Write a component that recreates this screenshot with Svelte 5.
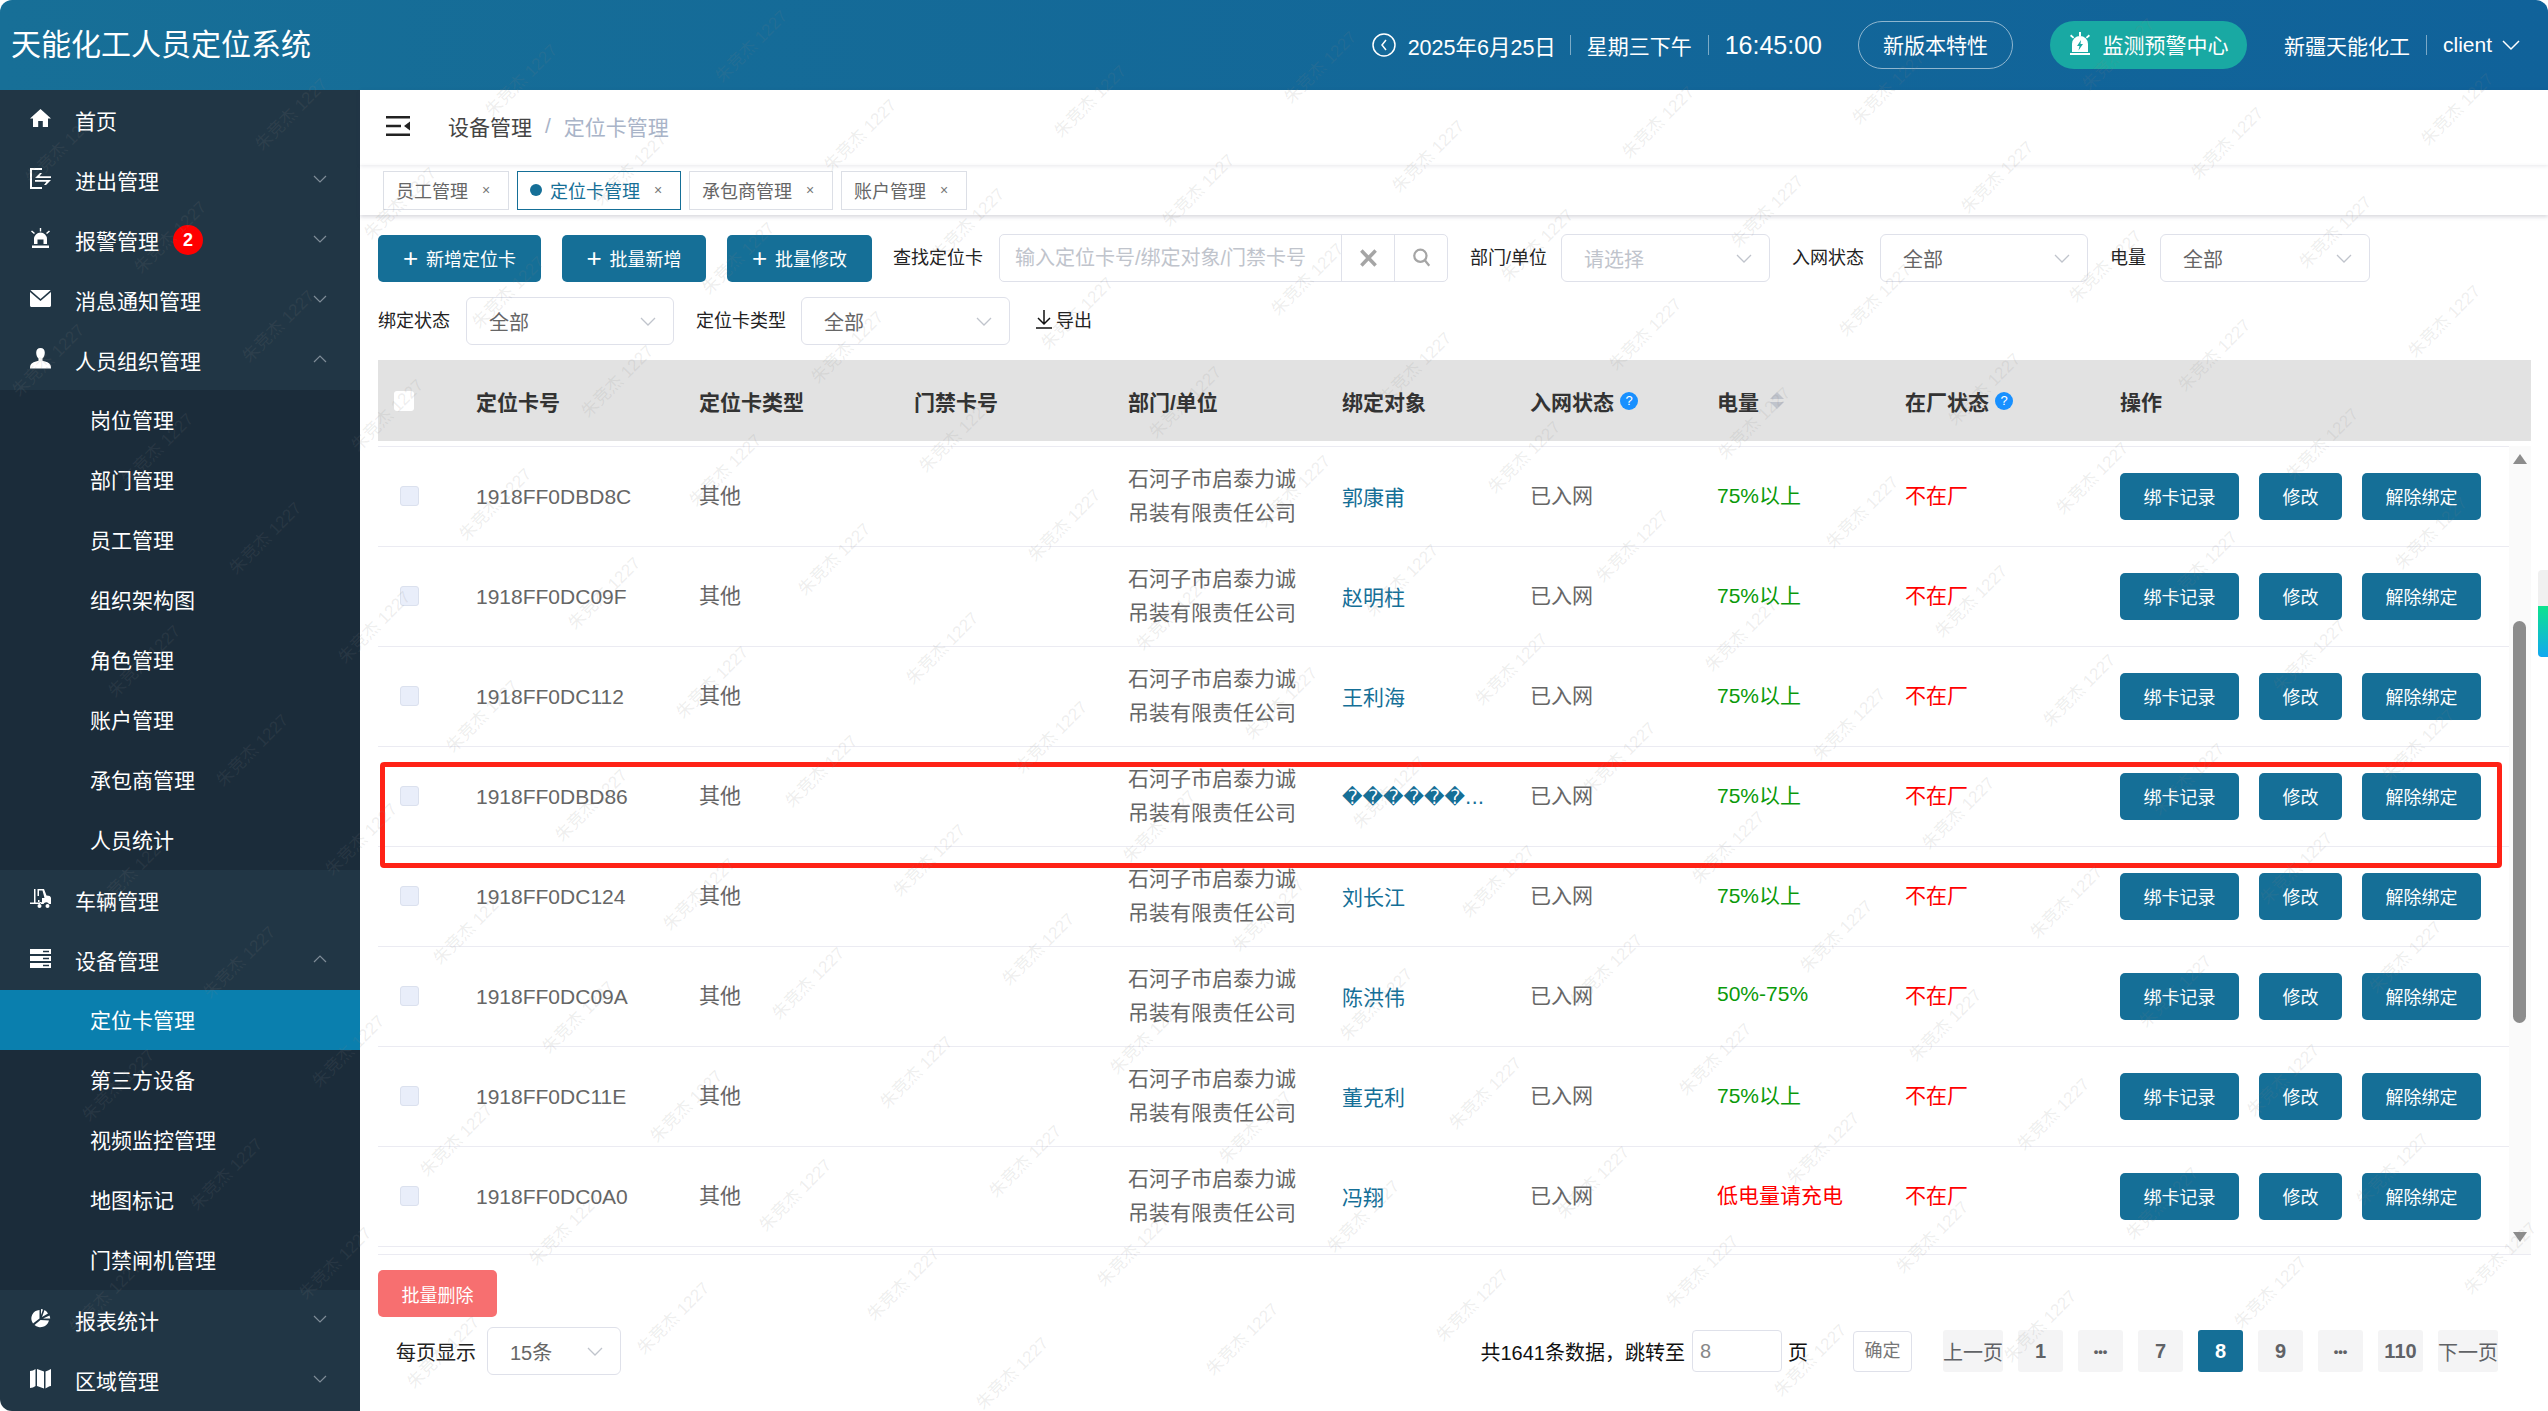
<script>
  const D = '\uFFFD'.repeat(6) + '...'

  const menu = [
    { name: '首页', icon: 'home' },
    { name: '进出管理', icon: 'inout', arrow: 'down' },
    { name: '报警管理', icon: 'alarm', arrow: 'down', badge: 2 },
    { name: '消息通知管理', icon: 'mail', arrow: 'down' },
    {
      name: '人员组织管理', icon: 'user', arrow: 'up',
      children: ['岗位管理', '部门管理', '员工管理', '组织架构图', '角色管理', '账户管理', '承包商管理', '人员统计']
    },
    { name: '车辆管理', icon: 'truck' },
    {
      name: '设备管理', icon: 'server', arrow: 'up', active: '定位卡管理',
      children: ['定位卡管理', '第三方设备', '视频监控管理', '地图标记', '门禁闸机管理']
    },
    { name: '报表统计', icon: 'pie', arrow: 'down' },
    { name: '区域管理', icon: 'map', arrow: 'down' }
  ]

  const tags = [
    { name: '员工管理' },
    { name: '定位卡管理', active: true },
    { name: '承包商管理' },
    { name: '账户管理' }
  ]

  const rows = [
    { no: '1918FF0DBD8C', who: '郭康甫', power: '75%以上' },
    { no: '1918FF0DC09F', who: '赵明柱', power: '75%以上' },
    { no: '1918FF0DC112', who: '王利海', power: '75%以上' },
    { no: '1918FF0DBD86', who: D, power: '75%以上', broken: true },
    { no: '1918FF0DC124', who: '刘长江', power: '75%以上' },
    { no: '1918FF0DC09A', who: '陈洪伟', power: '50%-75%' },
    { no: '1918FF0DC11E', who: '董克利', power: '75%以上' },
    { no: '1918FF0DC0A0', who: '冯翔', power: '低电量请充电', low: true }
  ]

  const pages = [
    { t: '上一页', wide: true }, { t: '1' }, { t: '•••', dots: true }, { t: '7' }, { t: '8', on: true },
    { t: '9' }, { t: '•••', dots: true }, { t: '110' }, { t: '下一页', wide: true }
  ]

  // the watermark repeats on a slanted lattice
  const marks = []
  for (let k = -14; k < 16; k++) {
    for (let m = -16; m < 16; m++) {
      const x = 902 + k * 230 + m * 108.5
      const y = 1283 - k * 34 + m * 89
      if (x > 36 && x < 2512 && y > 36 && y < 1375) marks.push({ x, y })
    }
  }
</script>

{#snippet chevron(dir)}
  <svg class="chev" class:up={dir === 'up'} viewBox="0 0 14 8"><polyline points="1,1 7,7 13,1" /></svg>
{/snippet}

{#snippet select(text, cls, empty)}
  <div class="select {cls}" class:empty>
    <span>{text}</span>
    <svg class="sel-arrow" viewBox="0 0 16 9"><polyline points="1,1 8,8 15,1" /></svg>
  </div>
{/snippet}

{#snippet help()}
  <span class="help">?</span>
{/snippet}

{#snippet icon(name)}
  <svg class="m-icon" viewBox="0 0 21 21" fill="#fff">
    {#if name === 'home'}
      <path d="M10.5 1 21 10.5h-3V19h-5.2v-6H8.2v6H3v-8.5H0z" />
    {:else if name === 'inout'}
      <path d="M0 0h12v2H2v17h10v2H0z" />
      <path d="M10 5 5 10h16V8.200H9.500L12 5zM16 17l5-5H5v1.800h11.500L14 17z" />
    {:else if name === 'alarm'}
      <path d="M4 16V11a6.500 6.500 0 0 1 13 0v5h-3.500v-4.500h-6V16zM2 17.500h17V20H2z" />
      <path d="M9.800 0h1.400v3.500H9.800zM1 3.500 2 2.500l3 2.500-1 1zM20 3.500l-1-1-3 2.500 1 1z" />
    {:else if name === 'mail'}
      <path d="M1.500 2h18c.5 0 .8.100 1 .3L10.500 11 .5 2.300c.2-.2.500-.3 1-.3z" />
      <path d="M0 4l10.500 9L21 4v13.500c0 .8-.7 1.500-1.500 1.500h-18C.7 19 0 18.300 0 17.500z" />
    {:else if name === 'user'}
      <path d="M10.500 0c2.800 0 4.300 2 4.300 4.800 0 2.600-1 4.600-2.300 5.700v2.200c3.500.9 7 2 8 4.300.3.8.5 2 .5 3.500H0c0-1.500.2-2.700.5-3.500 1-2.300 4.500-3.400 8-4.300v-2.200C7.200 9.400 6.200 7.400 6.200 4.800 6.200 2 7.700 0 10.500 0z" />
    {:else if name === 'truck'}
      <path d="M4 1h1.500v13.500H10v1.500H0v-1.500h4z" />
      <path d="M7.500 1h6.500l2.500 6.500c2.500 0 4.500.8 4.500 2.500v6h-2a3 3 0 0 0-5.500 0h-2.500a3 3 0 0 0-3-2V12h1.500v2c1 0 2 0 2.500.5H12V10h2.500l-2-7.500H9V8H7.500z" />
      <circle cx="9.500" cy="18" r="2" /><circle cx="17.500" cy="18" r="2" />
    {:else if name === 'server'}
      <path fill-rule="evenodd" d="M0 1h21v5H0zM13 2.700v1.600h6V2.700zM0 8h21v5H0zM13 9.700v1.600h6V9.700zM0 15h21v5H0zM13 16.700v1.600h6v-1.600z" />
    {:else if name === 'pie'}
      <path d="M9.500 2v8.500L3 15.500A8.500 8.500 0 0 1 9.500 2z" />
      <path d="M11 1a8 8 0 0 1 2 .4L11 7zM14.500 2 12 9l6-3.500A8 8 0 0 0 14.500 2zM13 10.500l6.500-3c.5 1.200.7 2.200.7 3z" />
      <path d="M10.500 12 19 12.500A9 9 0 0 1 4.500 17z" />
    {:else if name === 'map'}
      <path d="M0 3c2 0 4-1 5.500-2v17C4 19 2 20 0 20zM7 1l7 2.500V20.500L7 18zM15.500 3.500C17 3 19 2 21 1v17c-2 0-4 1.500-5.500 2.500z" />
    {/if}
  </svg>
{/snippet}

<div class="app">
  <header class="top">
    <h1>天能化工人员定位系统</h1>
    <div class="top-right">
      <svg class="clock" viewBox="0 0 24 24"><circle cx="12" cy="12" r="11" /><polyline points="14,7 10,12 14,17" /></svg>
      <span class="date">2025年6月25日</span>
      <i class="sep"></i>
      <span class="week">星期三下午</span>
      <i class="sep"></i>
      <span class="time">16:45:00</span>
      <span class="pill ghost">新版本特性</span>
      <span class="pill teal">
        <svg class="siren" viewBox="0 0 24 24" fill="#fff">
          <path d="M4 20V12a8 8 0 0 1 16 0v8zM2 21h20v2H2z" />
          <path d="M11 0h2v4h-2zM2 4l1.200-1.400 3 2.600L5 6.500zM22 4l-1.200-1.400-3 2.600L19 6.500z" />
          <path fill="#19a9a3" d="M13 8l-4 6h2.500L10.500 18.500l4.500-6.500h-2.500z" />
        </svg>
        监测预警中心
      </span>
      <span class="org">新疆天能化工</span>
      <i class="sep"></i>
      <span class="client">client</span>
      <svg class="client-arrow" viewBox="0 0 18 11"><polyline points="1,1 9,9 17,1" /></svg>
    </div>
  </header>

  <div class="body">
    <aside class="side">
      {#each menu as item}
        <div class="m-row">
          {@render icon(item.icon)}
          <span class="m-name">{item.name}</span>
          {#if item.badge}<span class="badge">{item.badge}</span>{/if}
          {#if item.arrow}{@render chevron(item.arrow)}{/if}
        </div>
        {#if item.children}
          <div class="sub">
            {#each item.children as c}
              <div class="sub-row" class:on={c === item.active}>{c}</div>
            {/each}
          </div>
        {/if}
      {/each}
    </aside>

    <main class="main">
      <div class="crumbs">
        <svg class="fold" viewBox="0 0 24 20">
          <path d="M0 0h24v2.500H0zM0 17.500h24V20H0zM0 8.700h15v2.500H0z" />
          <path d="M24 5.500v9l-6-4.500z" />
        </svg>
        <span class="c1">设备管理</span>
        <span class="c-sl">/</span>
        <span class="c2">定位卡管理</span>
      </div>

      <div class="tags">
        {#each tags as t}
          <div class="tag" class:active={t.active}>
            {#if t.active}<i class="dot"></i>{/if}
            <span>{t.name}</span>
            <span class="x">×</span>
          </div>
        {/each}
      </div>

      <div class="content">
        <div class="tools">
          <button class="btn plus b1"><span class="pl">+</span>新增定位卡</button>
          <button class="btn plus b2"><span class="pl">+</span>批量新增</button>
          <button class="btn plus b3"><span class="pl">+</span>批量修改</button>
          <label class="lb find">查找定位卡</label>
          <div class="search">
            <span class="ph">输入定位卡号/绑定对象/门禁卡号</span>
            <span class="s-cell">
              <svg viewBox="0 0 16 16" preserveAspectRatio="none"><path d="M2 2l12 12M14 2 2 14" /></svg>
            </span>
            <span class="s-cell">
              <svg viewBox="0 0 16 18"><circle cx="7" cy="7" r="5.500" /><path d="M11 11l4 5" /></svg>
            </span>
          </div>
          <label class="lb dept">部门/单位</label>
          {@render select('请选择', 'w209', true)}
          <label class="lb net">入网状态</label>
          {@render select('全部', 'w208')}
          <label class="lb pw">电量</label>
          {@render select('全部', 'w210')}
        </div>

        <div class="tools second">
          <label class="lb bind">绑定状态</label>
          {@render select('全部', 'w208')}
          <label class="lb ctype">定位卡类型</label>
          {@render select('全部', 'w209')}
          <span class="export">
            <svg viewBox="0 0 18 20"><path d="M9 1v13M3 9l6 6 6-6M1 19h16" /></svg>
            导出
          </span>
        </div>

        <div class="thead grid">
          <div class="cell"><i class="hcheck"></i></div>
          <div class="cell">定位卡号</div>
          <div class="cell">定位卡类型</div>
          <div class="cell">门禁卡号</div>
          <div class="cell">部门/单位</div>
          <div class="cell">绑定对象</div>
          <div class="cell">入网状态{@render help()}</div>
          <div class="cell">电量<span class="sort"><i class="tu"></i><i class="td"></i></span></div>
          <div class="cell">在厂状态{@render help()}</div>
          <div class="cell">操作</div>
        </div>

        <div class="tbody">
          <div class="rows">
            {#each rows as r}
              <div class="row grid">
                <div class="cell"><i class="check"></i></div>
                <div class="cell no">{r.no}</div>
                <div class="cell lift">其他</div>
                <div class="cell"></div>
                <div class="cell dep">石河子市启泰力诚<br />吊装有限责任公司</div>
                <div class="cell who" class:broken={r.broken}>{r.who}</div>
                <div class="cell lift">已入网</div>
                <div class="cell power lift" class:low={r.low}>{r.power}</div>
                <div class="cell out lift">不在厂</div>
                <div class="cell ops">
                  <button class="btn">绑卡记录</button>
                  <button class="btn">修改</button>
                  <button class="btn">解除绑定</button>
                </div>
              </div>
            {/each}
          </div>
          <div class="bar">
            <i class="arr top-arr"></i>
            <i class="thumb"></i>
            <i class="arr bot-arr"></i>
          </div>
        </div>

        <button class="btn del">批量删除</button>

        <div class="foot">
          <span class="per">每页显示</span>
          {@render select('15条', 'w134')}
          <div class="pager">
            <span class="total">共1641条数据，跳转至</span>
            <span class="jump">8</span>
            <span class="ye">页</span>
            <span class="ok">确定</span>
            {#each pages as p}
              <span class="pg" class:wide={p.wide} class:on={p.on} class:dots={p.dots}>{p.t}</span>
            {/each}
          </div>
        </div>
      </div>
    </main>
  </div>

  <div class="note"></div>
  <div class="float-tab"><i></i></div>

  <div class="wm">
    {#each marks as w}
      <span style="left:{w.x}px;top:{w.y}px">朱竞杰 1227</span>
    {/each}
  </div>
</div>

<style>
  :global(body) {
    margin: 0;
    background: #fff;
  }
  .app {
    position: relative;
    width: 2548px;
    height: 1411px;
    overflow: hidden;
    border-radius: 12px;
    font-family: 'Liberation Sans', 'Noto Sans CJK SC', sans-serif;
    font-size: 21px;
    color: #666;
    background: #fff;
  }

  /* top bar */
  .top {
    height: 90px;
    display: flex;
    align-items: center;
    background: linear-gradient(90deg, #176f97, #10629a);
    color: #fff;
  }
  .top h1 {
    margin: 0 0 0 11px;
    font-size: 30px;
    font-weight: 400;
    line-height: 1;
  }
  .top-right {
    margin-left: auto;
    display: flex;
    align-items: center;
    padding-right: 28px;
  }
  .clock {
    width: 24px;
    height: 24px;
    margin-right: 12px;
    fill: none;
    stroke: #fff;
    stroke-width: 1.500;
  }
  .date { font-size: 21.500px; width: 146px; white-space: nowrap; }
  .week { font-size: 21px; }
  .time { font-size: 25px; margin-right: 36px; }
  .sep {
    width: 1px;
    height: 20px;
    background: rgba(255, 255, 255, 0.45);
    margin: 0 16px;
  }
  .pill {
    height: 48px;
    display: flex;
    align-items: center;
    justify-content: center;
    box-sizing: border-box;
    border-radius: 24px;
    padding-bottom: 2px;
  }
  .ghost {
    width: 155px;
    border: 1px solid #8fb6cf;
    margin-right: 37px;
  }
  .teal {
    width: 197px;
    background: #19a9a3;
    margin-right: 37px;
    gap: 10px;
  }
  .siren { width: 24px; height: 24px; }
  .client { font-size: 21px; margin-right: 10px; }
  .client-arrow {
    width: 18px;
    height: 11px;
    fill: none;
    stroke: #fff;
    stroke-width: 1.500;
  }

  .body {
    display: flex;
    height: 1321px;
  }

  /* side menu */
  .side {
    width: 360px;
    flex: none;
    background: #213645;
    color: #fff;
    overflow: hidden;
  }
  .m-row {
    height: 60px;
    display: flex;
    align-items: center;
    padding-left: 30px;
    position: relative;
  }
  .m-icon {
    width: 21px;
    height: 21px;
    margin-right: 24px;
    flex: none;
    margin-top: -3px;
  }
  .badge {
    width: 30px;
    height: 30px;
    margin-left: 14px;
    border-radius: 50%;
    background: #f00;
    font-size: 18px;
    font-weight: 700;
    display: flex;
    align-items: center;
    justify-content: center;
  }
  .chev {
    position: absolute;
    right: 33px;
    top: 25px;
    width: 14px;
    height: 8px;
    fill: none;
    stroke: #7f8c97;
    stroke-width: 1.200;
  }
  .chev.up { transform: rotate(180deg); }
  .sub { background: #1b2c3a; }
  .sub-row {
    height: 60px;
    line-height: 62px;
    padding-left: 90px;
  }
  .sub-row.on { background: #0a7fae; }

  /* breadcrumb and tabs */
  .main {
    flex: 1;
    min-width: 0;
  }
  .crumbs {
    height: 75px;
    display: flex;
    align-items: center;
    padding: 0 0 3px 26px;
    box-sizing: border-box;
    box-shadow: 0 1px 4px rgba(60, 60, 90, 0.12);
    position: relative;
  }
  .fold {
    width: 24px;
    height: 20px;
    fill: #222;
    margin-right: 38px;
  }
  .c1 { color: #444; }
  .c-sl { color: #a9b4c8; margin: 0 13px; }
  .c2 { color: #a9b4c8; }
  .tags {
    height: 50px;
    display: flex;
    gap: 8px;
    padding: 6px 0 0 23px;
    box-sizing: border-box;
    box-shadow: 0 2px 4px rgba(60, 60, 90, 0.2);
    position: relative;
  }
  .tag {
    height: 39px;
    box-sizing: border-box;
    border: 1px solid #dcdfe6;
    display: flex;
    align-items: center;
    padding: 0 18px 2px 12px;
    font-size: 18px;
  }
  .tag .x {
    width: 8px;
    font-size: 14px;
    margin-left: 14px;
    color: #777;
  }
  .tag.active {
    color: #156f97;
    border-color: #156f97;
  }
  .dot {
    width: 12px;
    height: 12px;
    border-radius: 50%;
    background: #156f97;
    margin-right: 8px;
  }

  /* filter rows */
  .content {
    padding: 19px 17px 0 18px;
  }
  .tools {
    display: flex;
    align-items: center;
    height: 48px;
  }
  .tools.second {
    margin-top: 15px;
  }
  .btn {
    height: 47px;
    padding: 0 23.500px 2px;
    border: 0;
    border-radius: 5px;
    background: #156f97;
    color: #fff;
    font: inherit;
    font-size: 18px;
    white-space: nowrap;
  }
  .btn.plus {
    padding: 0 0 2px;
    display: flex;
    align-items: center;
    justify-content: center;
    margin-top: 1px;
  }
  .b1 { width: 163px; }
  .b2 { width: 144px; margin-left: 21px; }
  .b3 { width: 145px; margin-left: 21px; }
  .pl {
    font-size: 26px;
    font-weight: 300;
    margin-right: 8px;
    line-height: 1;
  }
  .lb {
    font-size: 18px;
    color: #222;
    white-space: nowrap;
    margin-top: -4px;
  }
  .find { margin-left: 21px; margin-right: 16px; }
  .dept { margin-left: 22px; margin-right: 14px; }
  .net { margin-left: 22px; margin-right: 16px; }
  .pw { margin-left: 22px; margin-right: 14px; }
  .bind { margin-right: 16px; }
  .ctype { margin-left: 22px; margin-right: 15px; }
  .search {
    width: 449px;
    height: 48px;
    box-sizing: border-box;
    display: flex;
    border: 1px solid #dfe1ea;
    border-radius: 5px;
  }
  .ph {
    flex: 1;
    padding-left: 15px;
    font-size: 20px;
    line-height: 46px;
    color: #c0c4cc;
    white-space: nowrap;
    overflow: hidden;
  }
  .s-cell {
    width: 52px;
    flex: none;
    border-left: 1px solid #dfe1ea;
    display: flex;
    align-items: center;
    justify-content: center;
  }
  .s-cell svg {
    width: 19px;
    height: 20px;
    fill: none;
    stroke: #a5a5a5;
    stroke-width: 3;
  }
  .s-cell:last-child svg { stroke-width: 2; }
  .select {
    height: 48px;
    box-sizing: border-box;
    border: 1px solid #dfe1ea;
    border-radius: 6px;
    display: flex;
    align-items: center;
    justify-content: space-between;
    padding: 0 17px 0 22px;
    font-size: 20px;
    color: #666;
    flex: none;
  }
  .select.empty { color: #c0c4cc; }
  .w209 { width: 209px; }
  .w208 { width: 208px; }
  .w210 { width: 210px; }
  .w134 { width: 134px; }
  .sel-arrow {
    width: 16px;
    height: 9px;
    fill: none;
    stroke: #c0c4cc;
    stroke-width: 1.300;
  }
  .export {
    margin-left: 25px;
    display: flex;
    align-items: center;
    gap: 3px;
    font-size: 18px;
    color: #222;
    margin-top: -4px;
  }
  .export svg {
    width: 18px;
    height: 20px;
    fill: none;
    stroke: #111;
    stroke-width: 1.500;
  }

  /* table */
  .grid {
    display: grid;
    grid-template-columns: 98px 223px 215px 214px 214px 188px 187px 188px 215px 1fr;
    align-items: center;
  }
  .thead {
    height: 81px;
    margin-top: 15px;
    background: #e2e2e2;
    font-weight: 700;
    color: #333;
    white-space: nowrap;
  }
  .cell {
    display: flex;
    align-items: center;
    min-width: 0;
  }
  .cell.lift { padding-bottom: 5px; }
  .hcheck {
    width: 20px;
    height: 20px;
    margin-left: 16px;
    background: #fff;
    border-radius: 3px;
  }
  .help {
    width: 18px;
    height: 18px;
    margin-left: 6px;
    border-radius: 50%;
    background: #1890ff;
    color: #fff;
    font-size: 13px;
    font-weight: 400;
    display: flex;
    align-items: center;
    justify-content: center;
  }
  .sort {
    margin-left: 11px;
    display: flex;
    flex-direction: column;
    gap: 3px;
  }
  .tu, .td {
    width: 0;
    height: 0;
    border-left: 7px solid transparent;
    border-right: 7px solid transparent;
  }
  .tu { border-bottom: 7px solid #c0c4cc; }
  .td { border-top: 7px solid #c0c4cc; }
  .tbody {
    display: flex;
    margin-top: 5px;
    height: 809px;
    box-sizing: border-box;
    border-bottom: 1px solid #ebebf2;
  }
  .rows {
    width: 2131px;
    flex: none;
    border-top: 1px solid #ebebf2;
    align-self: flex-start;
  }
  .row {
    height: 100px;
    box-sizing: border-box;
    border-bottom: 1px solid #ebebf2;
  }
  .check {
    width: 19px;
    height: 20px;
    margin: 0 0 2px 22px;
    background: #e9eefa;
    border: 1px solid #dbe1ee;
    border-radius: 3px;
    box-sizing: border-box;
  }
  .dep {
    display: block;
    line-height: 34px;
    padding-bottom: 2px;
  }
  .who { color: #156f97; white-space: nowrap; padding-bottom: 2px; }
  .who.broken {
    font-family: 'DejaVu Sans', 'Liberation Sans', sans-serif;
    font-size: 20px;
    padding-bottom: 0;
  }
  .power { color: #0a9a0a; }
  .power.low, .out { color: #f00; }
  .ops { gap: 20px; }
  .bar {
    flex: 1;
    background: #fafafa;
    position: relative;
  }
  .arr {
    position: absolute;
    left: 4px;
    width: 0;
    height: 0;
    border-left: 7px solid transparent;
    border-right: 7px solid transparent;
  }
  .top-arr { top: 8px; border-bottom: 10px solid #8c8c8c; }
  .bot-arr { top: 786px; border-top: 10px solid #8c8c8c; }
  .thumb {
    position: absolute;
    left: 4px;
    top: 175px;
    width: 13px;
    height: 402px;
    border-radius: 7px;
    background: #8c8c8c;
  }
  .del {
    display: block;
    margin-top: 15px;
    width: 119px;
    padding: 0;
    background: #f76f70;
  }
  .foot {
    display: flex;
    align-items: center;
    margin-top: 10px;
    padding-left: 18px;
  }
  .per {
    font-size: 20px;
    color: #222;
    margin-right: 11px;
  }
  .pager {
    margin-left: auto;
    display: flex;
    align-items: center;
    margin-right: 33px;
    font-size: 20px;
  }
  .total { color: #111; margin-right: 7px; white-space: nowrap; }
  .jump {
    width: 90px;
    height: 42px;
    box-sizing: border-box;
    border: 1px solid #dfe1ea;
    border-radius: 4px;
    padding-left: 7px;
    line-height: 40px;
    color: #888;
  }
  .ye { color: #111; margin: 0 45px 0 6px; }
  .ok {
    width: 59px;
    height: 41px;
    box-sizing: border-box;
    border: 1px solid #dfe1ea;
    border-radius: 4px;
    font-size: 18px;
    line-height: 39px;
    text-align: center;
    color: #777;
    margin-right: 31px;
  }
  .pg {
    width: 45px;
    height: 42px;
    margin-right: 15px;
    background: #f4f4f5;
    border-radius: 3px;
    display: flex;
    align-items: center;
    justify-content: center;
    font-weight: 700;
    color: #606266;
    white-space: nowrap;
  }
  .pg:last-child { margin-right: 0; }
  .pg.wide {
    width: 60px;
    font-weight: 400;
  }
  .pg.dots { font-size: 13px; }
  .pg.on {
    background: #156f97;
    color: #fff;
  }

  /* overlays */
  .note {
    position: absolute;
    left: 380px;
    top: 762px;
    width: 2122px;
    height: 106px;
    box-sizing: border-box;
    border: 5px solid #ff2216;
    border-radius: 4px;
  }
  .float-tab {
    position: absolute;
    right: 0;
    top: 570px;
    width: 10px;
    height: 87px;
    background: #f0f0f0;
    border-radius: 4px 0 0 4px;
    overflow: hidden;
  }
  .float-tab i {
    display: block;
    margin-top: 36px;
    height: 51px;
    background: linear-gradient(#0de38e, #12a8f0);
  }
  .wm {
    position: absolute;
    inset: 0;
    pointer-events: none;
  }
  .wm span {
    position: absolute;
    font-size: 17px;
    white-space: nowrap;
    color: rgba(130, 130, 130, 0.14);
    transform: translate(-50%, -50%) rotate(-45deg);
  }
</style>
